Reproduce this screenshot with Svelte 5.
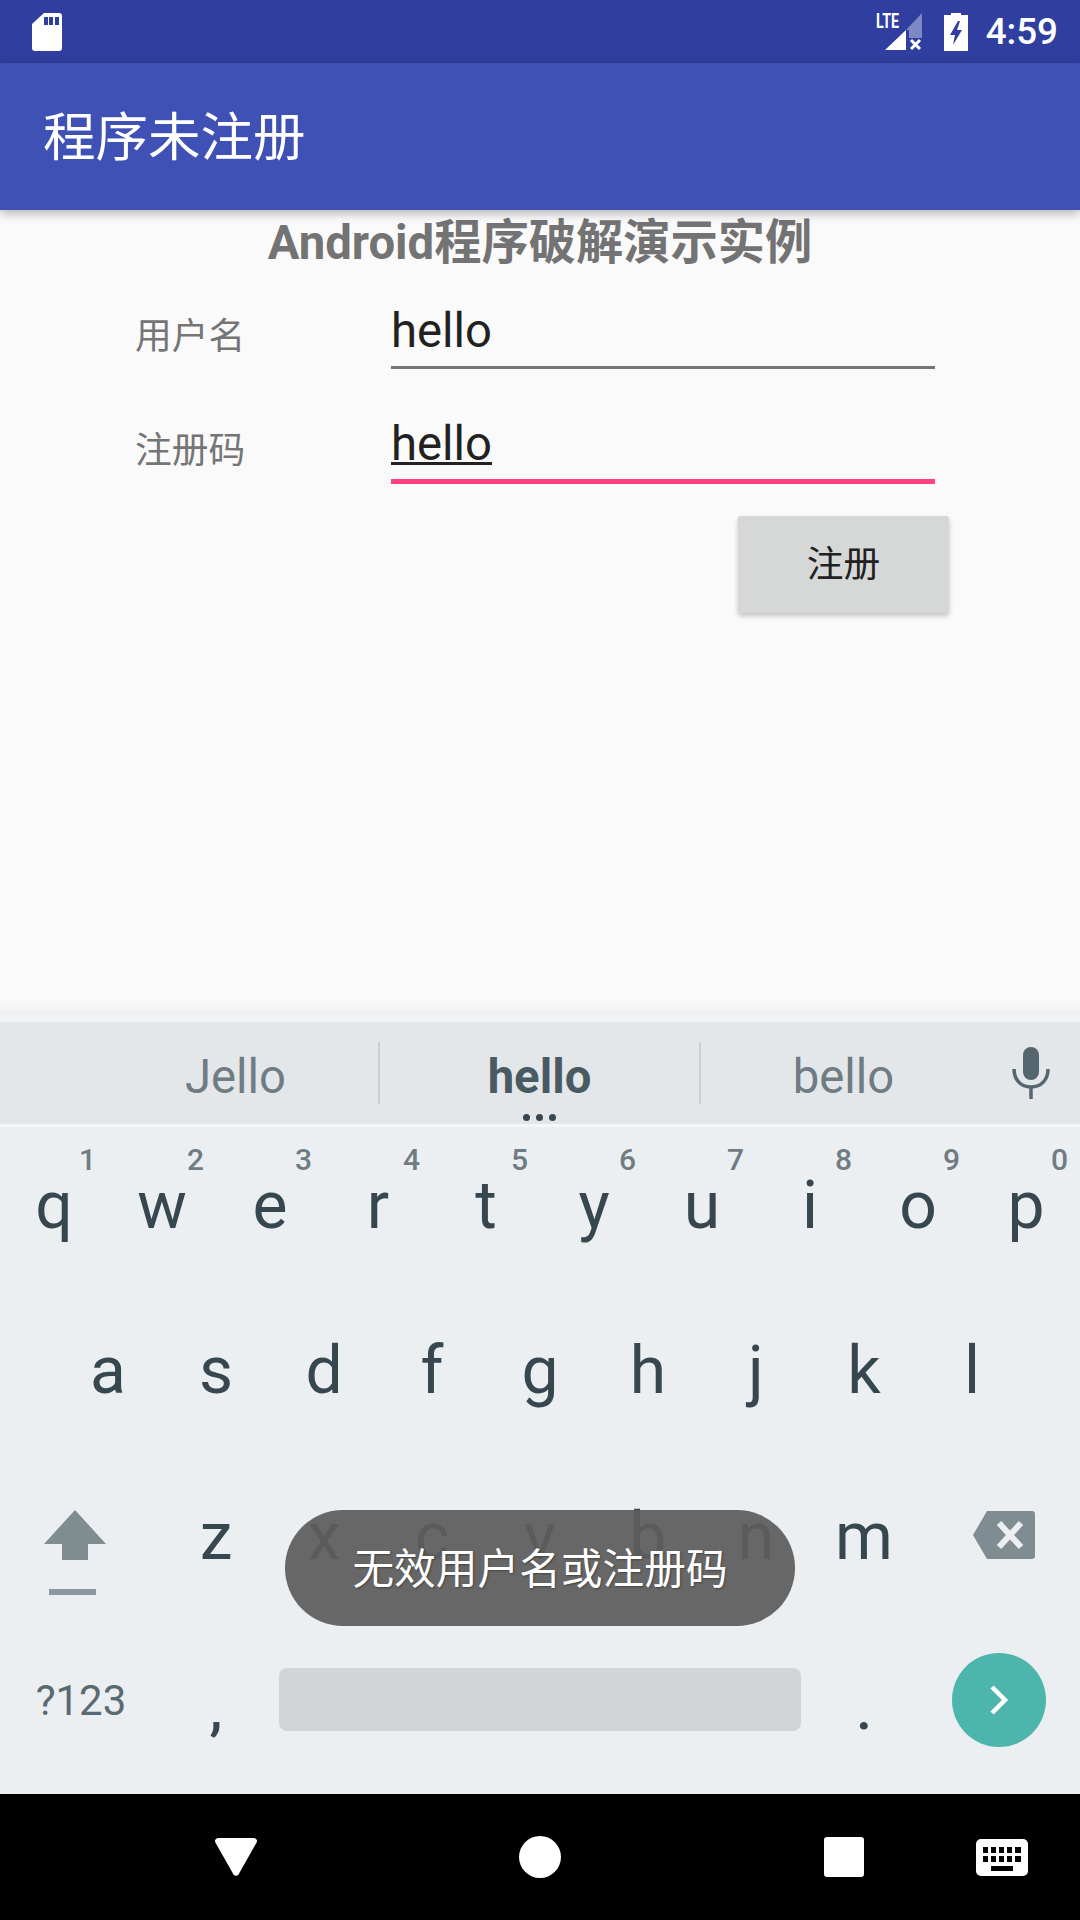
<script>
  const rowOne = [
    ["q", "1"], ["w", "2"], ["e", "3"], ["r", "4"], ["t", "5"],
    ["y", "6"], ["u", "7"], ["i", "8"], ["o", "9"], ["p", "0"]
  ];
  const rowTwo = ["a", "s", "d", "f", "g", "h", "j", "k", "l"];
  const rowThree = ["z", "x", "c", "v", "b", "n", "m"];
</script>

<div class="phone">
  <div class="status">
    <svg class="sd" width="30" height="38" viewBox="0 0 30 38">
      <path d="M12 0h15a3 3 0 0 1 3 3v32a3 3 0 0 1-3 3H3a3 3 0 0 1-3-3V11z" fill="#fff" />
      <path d="M12 4h4v8h-4zM17 4h4v8h-4zM23 4h4v8h-4z" fill="#303F9F" />
    </svg>
    <div class="status-right">
      <svg class="signal" width="50" height="40" viewBox="0 0 50 40">
        <text x="0" y="16" class="lte" textLength="23" lengthAdjust="spacingAndGlyphs">LTE</text>
        <path d="M30 18v20H9z" fill="#fff" />
        <path d="M30 18 46 1v25H33v-8z" fill="#fff" opacity=".38" />
        <path d="M35 28l9 9M44 28l-9 9" stroke="#fff" stroke-width="3" />
      </svg>
      <svg class="battery" width="24" height="38" viewBox="0 0 24 38">
        <path d="M7 0h10v2h7v36H0V2h7z" fill="#fff" />
        <path d="M14 8 6 22h5l-2 10 9-15h-5l3-9z" fill="#303F9F" />
      </svg>
      <span class="time">4:59</span>
    </div>
  </div>

  <header class="appbar">程序未注册</header>

  <main class="content">
    <h1>Android程序破解演示实例</h1>
    <div class="row">
      <span class="label">用户名</span>
      <div class="field">hello</div>
    </div>
    <div class="row">
      <span class="label">注册码</span>
      <div class="field active"><span>hello</span></div>
    </div>
    <div class="actions">
      <div class="btn">注册</div>
    </div>
  </main>

  <div class="keyboard">
    <div class="suggestions">
      <div class="sug">Jello</div>
      <div class="sug main">hello<span class="dots"></span></div>
      <div class="sug">bello</div>
      <svg class="mic" width="38" height="52" viewBox="0 0 38 52">
        <rect x="11" y="0" width="16" height="33" rx="8" fill="#56666e" />
        <path d="M2 22c0 11 7 18 17 18s17-7 17-18" fill="none" stroke="#56666e" stroke-width="3.5" />
        <path d="M19 40v12" stroke="#56666e" stroke-width="3.5" />
      </svg>
    </div>
    <div class="keys">
      <div class="keyrow first">
        {#each rowOne as [letter, digit]}
          <div class="key"><sup>{digit}</sup>{letter}</div>
        {/each}
      </div>
      <div class="keyrow second">
        {#each rowTwo as letter}
          <div class="key">{letter}</div>
        {/each}
      </div>
      <div class="keyrow">
        <div class="key wide">
          <svg class="shift" width="64" height="86" viewBox="0 0 64 86">
            <path d="M32 0 63 34H45v16H19V34H1z" fill="#7f8c90" />
            <rect x="6" y="79" width="47" height="6" fill="#8d999e" />
          </svg>
        </div>
        {#each rowThree as letter}
          <div class="key">{letter}</div>
        {/each}
        <div class="key wide">
          <svg class="del" width="62" height="48" viewBox="0 0 62 48">
            <path d="M14 0h45a3 3 0 0 1 3 3v42a3 3 0 0 1-3 3H14L0 24z" fill="#7f8c91" />
            <path d="M26 12l22 24M48 12 26 36" stroke="#eceff1" stroke-width="6" />
          </svg>
        </div>
      </div>
      <div class="keyrow">
        <div class="key wide symbols">?123</div>
        <div class="key punct">,</div>
        <div class="space"></div>
        <div class="key punct">.</div>
        <div class="key wide">
          <div class="enter">
            <svg width="20" height="32" viewBox="0 0 20 32">
              <path d="M3 3l13 13L3 29" fill="none" stroke="#fff" stroke-width="4.5" />
            </svg>
          </div>
        </div>
      </div>
    </div>
  </div>

  <nav class="navbar">
    <svg width="42" height="38" viewBox="0 0 42 38">
      <path d="M3 0h36a3 3 0 0 1 2.6 4.4L23.5 36.5a3 3 0 0 1-5 0L.4 4.4A3 3 0 0 1 3 0z" fill="#fff" />
    </svg>
    <div class="home"></div>
    <div class="recents"></div>
    <svg class="kbd" width="52" height="37" viewBox="0 0 52 37">
      <rect width="52" height="37" rx="5" fill="#fff" />
      <path d="M7 8h5v6H7zM15 8h5v6h-5zM23 8h5v6h-5zM31 8h5v6h-5zM39 8h6v6h-6zM7 17h5v6H7zM15 17h5v6h-5zM23 17h5v6h-5zM31 17h5v6h-5zM39 17h6v6h-6zM15 27h22v5H15z" fill="#000" />
    </svg>
  </nav>

  <div class="toast">无效用户名或注册码</div>
</div>

<style>
  :global(body) {
    margin: 0;
  }

  .phone {
    position: relative;
    width: 1080px;
    height: 1920px;
    display: flex;
    flex-direction: column;
    overflow: hidden;
    background: #fafafa;
    font-family: Roboto, "Noto Sans CJK SC", sans-serif;
  }

  .status {
    height: 63px;
    flex: none;
    display: flex;
    justify-content: space-between;
    align-items: center;
    padding: 0 22px 0 32px;
    box-sizing: border-box;
    background: #303f9f;
    color: #fff;
  }

  .status-right {
    display: flex;
    align-items: center;
  }

  .signal {
    overflow: visible;
  }

  .lte {
    font-size: 20px;
    font-weight: 700;
    fill: #fff;
  }

  .battery {
    margin-left: 18px;
  }

  .time {
    margin-left: 18px;
    font-size: 36.75px;
    font-weight: 500;
    line-height: 63px;
  }

  .appbar {
    height: 147px;
    flex: none;
    position: relative;
    z-index: 1;
    display: flex;
    align-items: center;
    padding: 0 0 7px 43px;
    box-sizing: border-box;
    background: #3f51b5;
    color: #fff;
    font-size: 52.5px;
    box-shadow: 0 3px 10px rgba(0, 0, 0, 0.3);
  }

  .content {
    flex: 1;
    background: linear-gradient(#fafafa 98%, #eeeeee);
  }

  h1 {
    margin: 6px 0 0;
    font-size: 47.25px;
    line-height: 54px;
    font-weight: 700;
    text-align: center;
    color: #737373;
  }

  .row {
    display: flex;
    align-items: center;
    height: 114px;
    padding-left: 135px;
    box-sizing: border-box;
  }

  .label {
    width: 256px;
    padding-top: 12px;
    font-size: 36.75px;
    color: #757575;
  }

  .field {
    width: 544px;
    height: 84px;
    box-sizing: border-box;
    line-height: 92px;
    font-size: 47.25px;
    color: #212121;
    border-bottom: 3px solid #757575;
  }

  .field span {
    text-decoration: underline;
    text-decoration-thickness: 3px;
  }

  .field.active {
    height: 86px;
    border-bottom: 5px solid #ff4081;
  }

  .actions {
    display: flex;
    justify-content: flex-end;
    padding: 18px 131px 0 0;
  }

  .btn {
    width: 211px;
    height: 97px;
    box-sizing: border-box;
    padding-bottom: 8px;
    display: flex;
    align-items: center;
    justify-content: center;
    border-radius: 3px;
    background: #d6d7d7;
    color: #212121;
    font-size: 36.75px;
    box-shadow: 0 3px 5px rgba(0, 0, 0, 0.22);
  }

  .keyboard {
    flex: none;
    height: 779px;
    display: flex;
    flex-direction: column;
    background: #eceff1;
  }

  .suggestions {
    height: 102px;
    flex: none;
    display: flex;
    align-items: center;
    background: #e4e7ea;
    border-top: 7px solid #f2f3f4;
    border-bottom: 3px solid #f5f6f7;
    position: relative;
    padding-left: 93px;
  }

  .sug {
    position: relative;
    width: 285px;
    height: 62px;
    line-height: 70px;
    text-align: center;
    font-size: 47.25px;
    color: #6f7c83;
  }

  .sug.main {
    width: 319px;
    font-weight: 700;
    color: #4a5a62;
    border-left: 2px solid #ccd0d3;
    border-right: 2px solid #ccd0d3;
  }

  .dots {
    position: absolute;
    left: 50%;
    bottom: -17px;
    width: 7px;
    height: 7px;
    margin-left: -17px;
    border-radius: 50%;
    background: #37474f;
    box-shadow: 13px 0 #37474f, 26px 0 #37474f;
  }

  .mic {
    position: absolute;
    left: 1012px;
    top: 25px;
  }

  .keys {
    flex: 1;
  }

  .keyrow {
    height: 164px;
    box-sizing: border-box;
    display: flex;
    justify-content: center;
    align-items: center;
  }

  .keyrow.first {
    padding-bottom: 6px;
  }

  .keyrow.second {
    padding-bottom: 4px;
  }

  .key {
    position: relative;
    width: 108px;
    display: flex;
    justify-content: center;
    align-items: center;
    font-size: 66px;
    line-height: 80px;
    color: #37474f;
  }

  .key sup {
    position: absolute;
    right: 12px;
    top: -24px;
    font-size: 30px;
    line-height: 36px;
    font-weight: 500;
    color: #6f7c83;
  }

  .key.wide {
    width: 162px;
  }

  .shift {
    margin: 32px 12px 0 0;
  }

  .del {
    margin: 0 0 4px 10px;
  }

  .symbols {
    font-size: 42px;
    color: #5a6a72;
  }

  .punct {
    padding-top: 16px;
    font-weight: 500;
    font-size: 58px;
  }

  .space {
    width: 522px;
    height: 63px;
    margin: 0 9px 4px;
    border-radius: 8px;
    background: #d1d5d8;
  }

  .enter {
    width: 94px;
    height: 94px;
    margin-bottom: 2px;
    display: flex;
    align-items: center;
    justify-content: center;
    border-radius: 50%;
    background: #4db6ac;
  }

  .navbar {
    flex: none;
    height: 126px;
    display: flex;
    align-items: center;
    background: #000;
    padding-left: 215px;
    box-sizing: border-box;
  }

  .home {
    width: 42px;
    height: 42px;
    margin-left: 262px;
    border-radius: 50%;
    background: #fff;
  }

  .recents {
    width: 40px;
    height: 40px;
    margin-left: 263px;
    border-radius: 3px;
    background: #fff;
  }

  .kbd {
    margin-left: 112px;
  }

  .toast {
    position: absolute;
    left: 285px;
    top: 1510px;
    width: 510px;
    height: 116px;
    box-sizing: border-box;
    padding-bottom: 4px;
    display: flex;
    align-items: center;
    justify-content: center;
    border-radius: 58px;
    background: rgba(92, 92, 92, 0.93);
    color: #fff;
    font-size: 41.7px;
    text-shadow: 1px 1px 2px rgba(0, 0, 0, 0.35);
  }
</style>
